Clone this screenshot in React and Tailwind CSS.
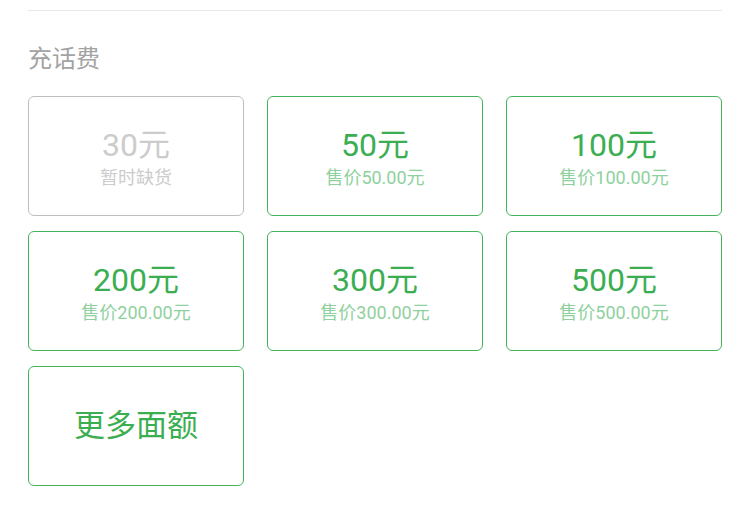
const items = [
  { title: '30元', sub: '暂时缺货', disabled: true },
  { title: '50元', sub: '售价50.00元' },
  { title: '100元', sub: '售价100.00元' },
  { title: '200元', sub: '售价200.00元' },
  { title: '300元', sub: '售价300.00元' },
  { title: '500元', sub: '售价500.00元' },
];

export default function App() {
  return (
    <div
      className="w-[750px] h-[507px] bg-white px-[28px] pt-[10px]"
      style={{ fontFamily: 'Roboto, "Noto Sans CJK SC", sans-serif' }}
    >
      <div className="border-t border-[#e8e8e8]" />
      <div className="mt-[32px] text-[24px] leading-[32px] text-[#a3a3a3]">充话费</div>
      <div className="mt-[21px] grid grid-cols-3 gap-x-[23px] gap-y-[15px]">
        {items.map((it) => (
          <div
            key={it.title}
            className={`h-[120px] pt-[2px] rounded-[6px] border flex flex-col items-center justify-center ${
              it.disabled ? 'border-[#bdbdbd]' : 'border-[#45b35c]'
            }`}
          >
            <div
              className={`text-[32px] leading-[38px] ${
                it.disabled ? 'text-[#cccccc]' : 'text-[#3bae52]'
              }`}
            >
              {it.title}
            </div>
            <div
              className={`mt-[3px] text-[18px] leading-[22px] ${
                it.disabled ? 'text-[#cccccc]' : 'text-[#8fd19e]'
              }`}
            >
              {it.sub}
            </div>
          </div>
        ))}
        <div className="h-[120px] rounded-[6px] border border-[#45b35c] flex items-center justify-center">
          <div className="text-[31px] leading-[38px] text-[#3bae52]">更多面额</div>
        </div>
      </div>
    </div>
  );
}
